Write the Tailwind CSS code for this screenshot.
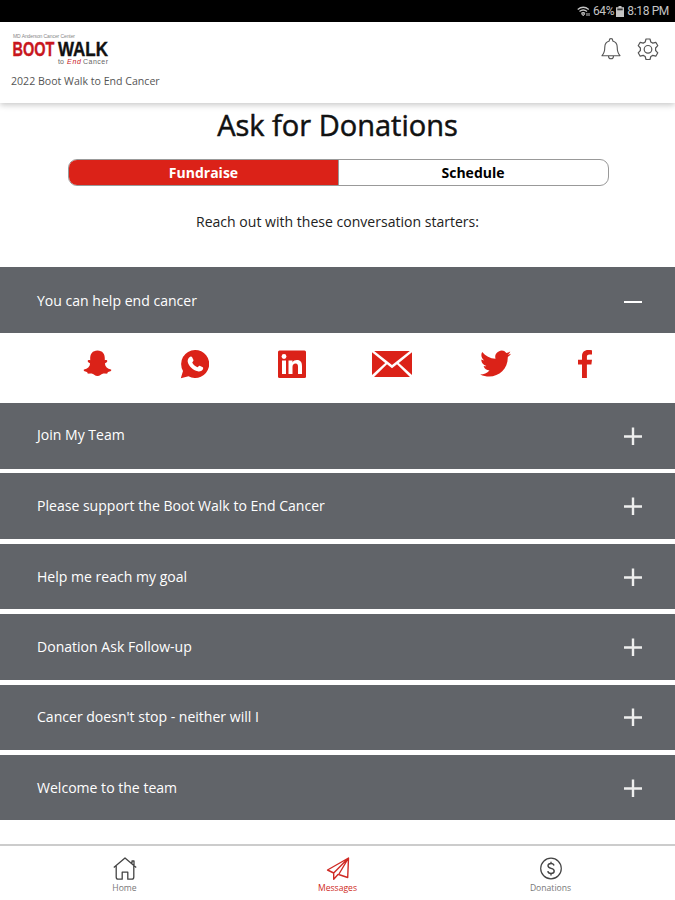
<!DOCTYPE html>
<html lang="en">
<head>
  <meta charset="UTF-8">
  <meta name="viewport" content="width=device-width, initial-scale=1.0">
  <title>Ask for Donations</title>
  <script src="https://cdn.jsdelivr.net/npm/@tailwindcss/browser@4"></script>
</head>
<body class="h-screen overflow-hidden bg-white flex flex-col font-['Open_Sans',sans-serif] text-[#222]">

  <!-- Status Bar -->
  <div class="h-[22px] shrink-0 bg-black text-[#c4c4c4] flex items-center justify-end pr-[6px] font-[Roboto,sans-serif] text-[12px]">
    <svg class="w-[13px] h-[11px] mr-[3px]" viewBox="0 0 13 11" fill="none" stroke="currentColor" stroke-width="1.3">
      <path d="M.7 3.5Q6.2-1 11.8 3.5M2.5 5.5Q6.2 2.5 10 5.5M4.3 7.4Q6.2 6 8 7.4"/>
      <path d="M6.2 9.8L4.8 8h2.8zM10 7v3M12 7v3" stroke-width="1"/>
    </svg>
    <span class="tracking-[-0.3px]">64%</span>
    <svg class="w-[8px] h-[11px] ml-[2px] mr-[3px]" viewBox="0 0 8 11" fill="currentColor">
      <path d="M2.5 0h3v1.2H8V11H0V1.2h2.5z"/>
      <path d="M1.3 2.5h5.4v1.8H1.3z" fill="#333"/>
    </svg>
    <span class="tracking-[-0.35px]">8:18 PM</span>
  </div>

  <!-- Header -->
  <header class="relative h-[81px] shrink-0 bg-white shadow-[0_2px_6px_rgba(0,0,0,0.22)] flex justify-between pl-[11px] pr-[16px]">
    <div class="pt-[10px]">
      <svg class="block w-[110px] h-[34px] overflow-visible font-['Liberation_Sans',sans-serif]" viewBox="0 0 110 34">
        <text x="2" y="6" font-size="5" textLength="62" fill="#888">MD Anderson Cancer Center</text>
        <text x="1.5" y="24" font-size="20" font-weight="700" textLength="42" lengthAdjust="spacingAndGlyphs" fill="#c8161d" stroke="#c8161d" stroke-width=".4">BOOT</text>
        <text x="47" y="24" font-size="20" font-weight="700" textLength="50" lengthAdjust="spacingAndGlyphs" fill="#111" stroke="#111" stroke-width=".4">WALK</text>
        <text x="47" y="32" font-size="7" fill="#666" textLength="6">to</text>
        <text x="56" y="32" font-size="7" fill="#c8161d" font-style="italic" textLength="14">End</text>
        <text x="72" y="32" font-size="7" fill="#666" textLength="25">Cancer</text>
      </svg>
      <p class="mt-[7px] text-[10.6px] leading-[16px] text-[#555] whitespace-nowrap">2022 Boot Walk to End Cancer</p>
    </div>
    <div class="flex gap-[16px] pt-[16px] text-[#555]">
      <svg class="w-[20px] h-[23px]" viewBox="0 0 20 23" fill="none" stroke="currentColor" stroke-width="1.1" stroke-linejoin="round">
        <path d="M8.3 3V2.3a1.7 1.7 0 0 1 3.4 0V3c3 .8 4.5 3 4.5 6 0 4.5.8 6.5 2.8 8.7H1C3 15.5 3.800 13.5 3.8 9c0-3 1.500-5.200 4.500-6zM7.500 18a2.500 2.800 0 0 0 5 0"/>
      </svg>
      <svg class="w-[22px] h-[23px]" viewBox="0 0 22 23" fill="none" stroke="currentColor" stroke-width="1.2" stroke-linejoin="round">
        <path d="M9 1h4l.8 3 2 1.100 3-.8 2 3.400-2.200 2.300v2.500l2.200 2.300-2 3.400-3-.8-2 1.100-.8 3H9l-.8-3-2-1.100-3 .8-2-3.400 2.200-2.300V10L1.200 7.700l2-3.400 3 .8 2-1.100z"/>
        <circle cx="11" cy="11.3" r="3.8"/>
      </svg>
    </div>
  </header>

  <!-- Title and Tabs -->
  <h1 class="mt-[2px] h-[40px] shrink-0 leading-[40px] text-center text-[29px] [-webkit-text-stroke:0.5px_#111] text-[#111]">Ask for Donations</h1>
  <div class="mt-[14px] ml-[68px] w-[541px] h-[27px] shrink-0 flex rounded-[9px] border border-[#999] overflow-hidden text-[14px] leading-[25px] font-bold">
    <button class="w-[269px] bg-[#db2218] text-white">Fundraise</button>
    <button class="w-[270px] border-l border-[#999] text-black pr-[1px]">Schedule</button>
  </div>
  <p class="mt-[26px] h-[20px] shrink-0 leading-[20px] text-center text-[14.05px]">Reach out with these conversation starters:</p>

  <!-- Conversation Starters -->
  <main class="mt-[35px] shrink-0 flex flex-col text-white text-[14.05px]">
    <div class="h-[66px] bg-[#616469] flex items-center justify-between pl-[37px] pr-[33px]">
      <span class="mt-[2px]">You can help end cancer</span>
      <svg class="w-[18px] h-[18px]" viewBox="0 0 18 18" stroke="#fff" stroke-width="2"><path d="M0 11h18"/></svg>
    </div>

    <!-- Share Icons -->
    <div class="h-[70px] flex items-start pt-[16px] pl-[83px] text-[#db2218]">
      <svg class="w-[29px] h-[30px]" viewBox="0 0 29 30" fill="currentColor">
        <path d="M14.5 1.5c5 0 7.500 3.500 7.300 8.500v1.300c1-.6 2.400-.3 2.500.6.2 1.200-1.800 1.700-2.400 2.500.2 3.200 2.600 5.400 6 6.200.7.3.5 1.200-.4 1.600-1.300.6-2.300.5-2.700 1-.4.5-.2 1.200-.8 1.400-1.200.3-2.800-.4-4.300.1-1.700.6-2.700 2.300-5.200 2.300s-3.500-1.700-5.200-2.300c-1.500-.5-3.100.2-4.300-.1-.6-.2-.4-.9-.8-1.400-.4-.5-1.400-.4-2.700-1-.9-.4-1.100-1.300-.4-1.600 3.400-.8 5.800-3 6-6.200-.6-.8-2.600-1.300-2.400-2.500.1-.9 1.500-1.200 2.500-.6V10C7 5 9.500 1.500 14.500 1.500z"/>
      </svg>
      <svg class="w-[29px] h-[30px] ml-[68px]" viewBox="0 0 29 30" fill="currentColor">
        <path d="M15 1a14 14 0 1 1-6.500 26.300L.8 29.200 3 22A14 14 0 0 1 15 1z"/>
        <path fill="#fff" d="M10.300 7.700c.6-.4 1.300-.3 1.700.4l1.500 3c.3.700-.9 2-1.300 2.500 1 2.200 2.700 3.700 5.200 4.700.7-.5 1.500-1.900 2.300-1.600l3.100 1.500c.7.400.3 1.800-.2 2.600-1 1.400-3 2-4.800 1.500-5-1.300-9-5-10.100-9.600-.3-2 .9-4.200 2.600-5z"/>
      </svg>
      <svg class="w-[28px] h-[30px] ml-[69px]" viewBox="0 0 28 30" fill="currentColor">
        <rect y="1.5" width="28" height="27.5" rx="1.5"/>
        <path fill="#fff" d="M4 11.5h4V25H4zM10.500 11.5h4v1.900c.9-1.500 2.400-2.300 4.400-2.300 3.800 0 5.100 2.500 5.100 6V25h-4v-7.300c0-1.700-.5-3.100-2.400-3.100-2 0-3.100 1.400-3.100 3.300V25h-4z"/>
        <circle cx="6" cy="7.5" r="2.4" fill="#fff"/>
      </svg>
      <svg class="w-[40px] h-[30px] ml-[66px]" viewBox="0 0 40 30" fill="currentColor">
        <path d="M2.200 2h35.600L20 16zM0 3.300L13.200 14 0 26zM40 3.300L26.800 14 40 26zM15 15.300l5 3.900 5-3.900L38 28H2z"/>
      </svg>
      <svg class="w-[31px] h-[30px] ml-[68px]" viewBox="0 0 31 30" fill="currentColor">
        <path d="M31 4.800c-1.100.5-2.300.8-3.400 1 1.200-.8 2.200-1.900 2.700-3.300-1.200.7-2.500 1.200-3.900 1.500a6.300 6.300 0 0 0-10.900 5.700C10 9.400 5.500 6.800 2.200 2.900c-1.700 3-.8 6.600 2 8.500-1 0-2-.3-2.900-.8 0 3 2 5.700 5.100 6.300-.9.300-1.900.3-2.800.1a6.400 6.400 0 0 0 5.900 4.400A12.800 12.800 0 0 1 .2 25.500c13.600 6.500 28-2.900 27.600-17.500 1.300-.9 2.400-2 3.200-3.200z"/>
      </svg>
      <svg class="w-[14px] h-[30px] ml-[67px]" viewBox="0 0 14 30" fill="currentColor">
        <path d="M4 29V15.500H0V10.700h4V7.300C4 3.200 6.500 1 10.100 1c1.700 0 3.200.1 3.900.2v4.300h-2.500c-2.200 0-2.600 1-2.600 2.500v2.700H14l-.6 4.800H8.900V29z"/>
      </svg>
    </div>

    <div class="flex flex-col gap-[4.9px]">
      <div class="h-[65.5px] bg-[#616469] flex items-center justify-between pl-[37px] pr-[33px]">
        <span class="-mt-[2px]">Join My Team</span>
        <svg class="w-[18px] h-[18px]" viewBox="0 0 18 18" stroke="#eee" stroke-width="2.4"><path d="M0 9.500h18M9 .5v18"/></svg>
      </div>
      <div class="h-[65.5px] bg-[#616469] flex items-center justify-between pl-[37px] pr-[33px]">
        <span class="-mt-[1px]">Please support the Boot Walk to End Cancer</span>
        <svg class="w-[18px] h-[18px]" viewBox="0 0 18 18" stroke="#eee" stroke-width="2.4"><path d="M0 9.500h18M9 .5v18"/></svg>
      </div>
      <div class="h-[65.5px] bg-[#616469] flex items-center justify-between pl-[37px] pr-[33px]">
        <span>Help me reach my goal</span>
        <svg class="w-[18px] h-[18px]" viewBox="0 0 18 18" stroke="#eee" stroke-width="2.4"><path d="M0 9.500h18M9 .5v18"/></svg>
      </div>
      <div class="h-[65.5px] bg-[#616469] flex items-center justify-between pl-[37px] pr-[33px]">
        <span>Donation Ask Follow-up</span>
        <svg class="w-[18px] h-[18px]" viewBox="0 0 18 18" stroke="#eee" stroke-width="2.4"><path d="M0 9.500h18M9 .5v18"/></svg>
      </div>
      <div class="h-[65.5px] bg-[#616469] flex items-center justify-between pl-[37px] pr-[33px]">
        <span class="-mt-[1px]">Cancer doesn't stop - neither will I</span>
        <svg class="w-[18px] h-[18px]" viewBox="0 0 18 18" stroke="#eee" stroke-width="2.4"><path d="M0 9.500h18M9 .5v18"/></svg>
      </div>
      <div class="h-[65.5px] bg-[#616469] flex items-center justify-between pl-[37px] pr-[33px]">
        <span>Welcome to the team</span>
        <svg class="w-[18px] h-[18px]" viewBox="0 0 18 18" stroke="#eee" stroke-width="2.4"><path d="M0 9.500h18M9 .5v18"/></svg>
      </div>
    </div>
  </main>

  <!-- Bottom Navigation -->
  <nav class="mt-auto h-[56px] shrink-0 border-t-2 border-[#ccc] grid grid-cols-3 px-[18px] text-[8.6px] leading-[12px] text-[#777]">
    <a class="flex flex-col items-center gap-px pt-[11px]">
      <svg class="w-[24px] h-[24px]" viewBox="0 0 24 24" fill="none" stroke="#444" stroke-width="1.3" stroke-linejoin="round">
        <path d="M.8 10.500L12 1l11.200 9.500M19 7V4h2v4.700M3.200 9v11c0 1.500.7 2.200 2 2.200h4v-7h5.600v7h4c1.300 0 2-.7 2-2.200V9"/>
      </svg>
      <span>Home</span>
    </a>
    <a class="flex flex-col items-center gap-px pt-[11px] text-[#cf2a24]">
      <svg class="w-[24px] h-[24px]" viewBox="0 0 24 24" fill="none" stroke="currentColor" stroke-width="1.4" stroke-linejoin="round">
        <path d="M22.500 1L1.500 13l6.200 3L22.500 1l-.8 19.500-9-3L22.500 1M7.700 16v6.300l4.500-5"/>
      </svg>
      <span>Messages</span>
    </a>
    <a class="flex flex-col items-center gap-px pt-[11px]">
      <svg class="w-[24px] h-[24px]" viewBox="0 0 24 24" fill="none" stroke="#444" stroke-width="1.2">
        <circle cx="12" cy="11.5" r="10.3"/>
        <path d="M15 8.500c-.3-1.300-1.400-2-3-2-1.800 0-3 .9-3 2.300 0 3.400 6.200 1.700 6.200 5.200 0 1.500-1.300 2.500-3.200 2.500s-3-.9-3.200-2.300M12 4.700v2M12 16.500v2" stroke-width="1.4"/>
      </svg>
      <span>Donations</span>
    </a>
  </nav>

</body>
</html>
